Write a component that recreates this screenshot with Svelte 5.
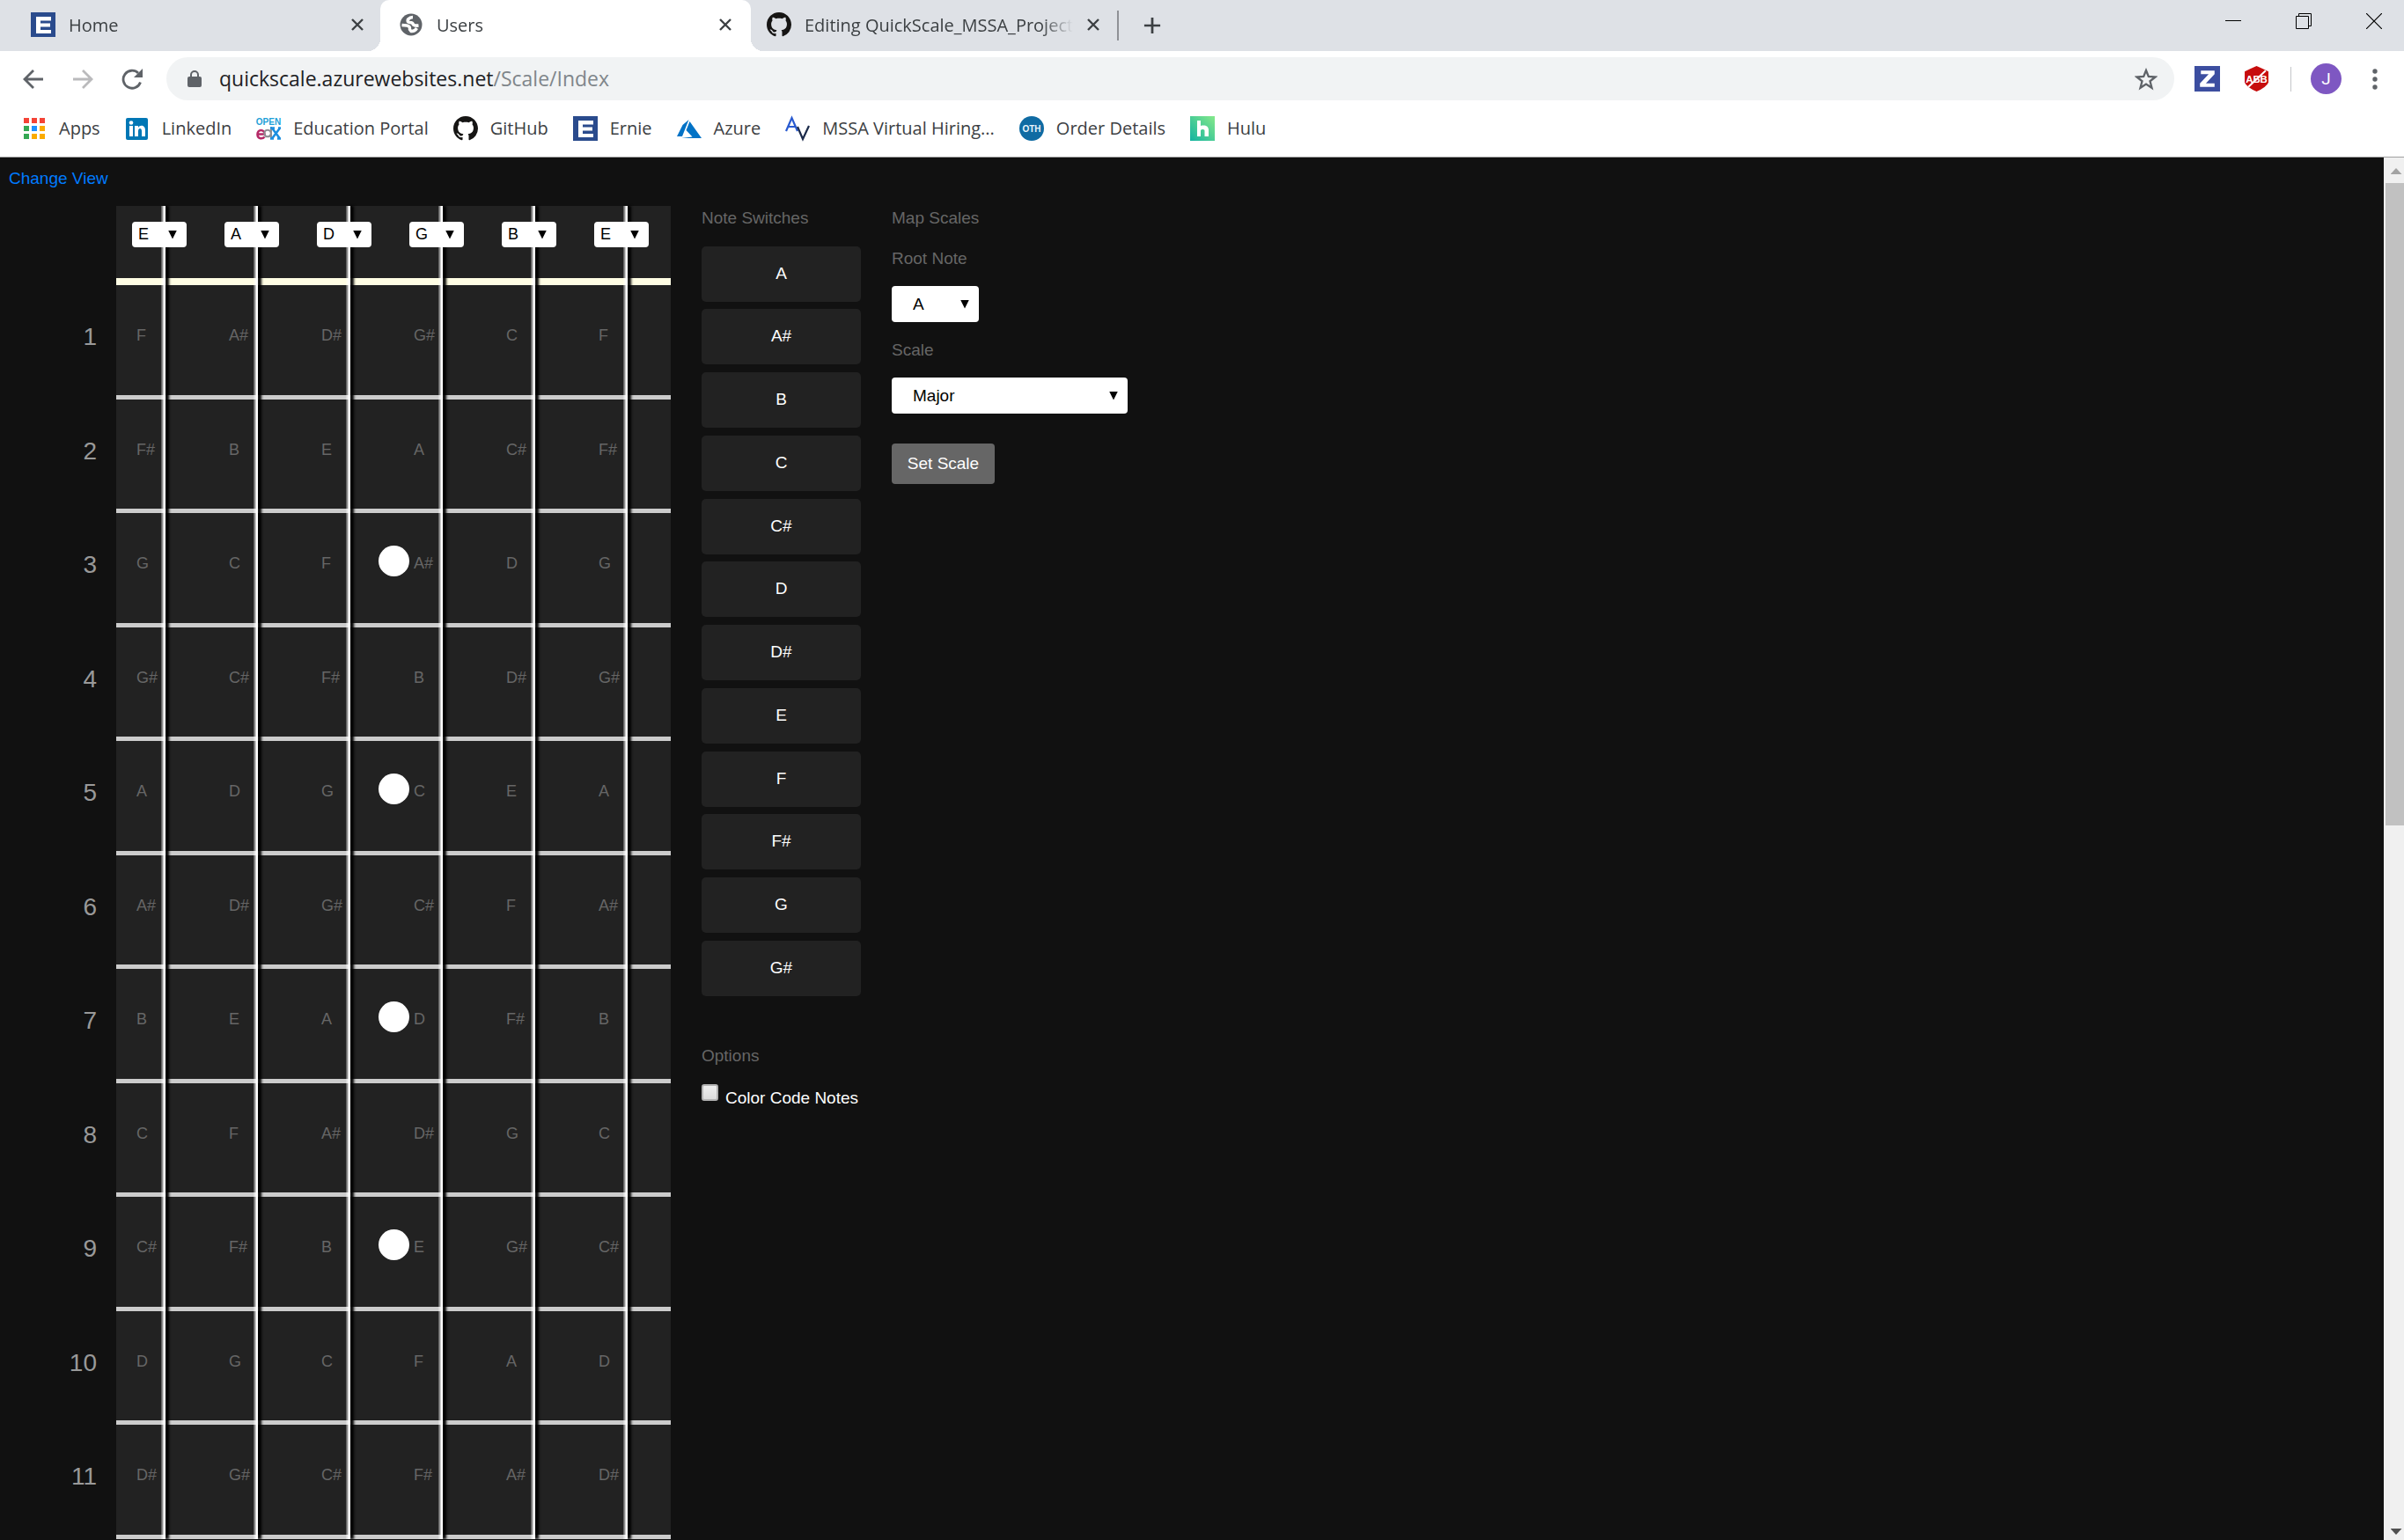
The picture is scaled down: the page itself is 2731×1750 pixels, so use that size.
<script lang="ts">
  const chromatic = ['A', 'A#', 'B', 'C', 'C#', 'D', 'D#', 'E', 'F', 'F#', 'G', 'G#'];
  const scales = ['Major', 'Minor', 'Pentatonic Major', 'Pentatonic Minor', 'Blues'];
  const frets = Array.from({ length: 11 }, (_, i) => i + 1);
  const markers = [3, 5, 7, 9];
  const tuning = $state(['E', 'A', 'D', 'G', 'B', 'E']);
  let root = $state('A');
  let scale = $state('Major');
  let colorCode = $state(false);

  const noteAt = (open: string, fret: number) =>
    chromatic[(chromatic.indexOf(open) + fret) % 12];

  const bookmarks = [
    { icon: 'apps', label: 'Apps' },
    { icon: 'linkedin', label: 'LinkedIn' },
    { icon: 'edx', label: 'Education Portal' },
    { icon: 'github', label: 'GitHub' },
    { icon: 'e', label: 'Ernie' },
    { icon: 'azure', label: 'Azure' },
    { icon: 'av', label: 'MSSA Virtual Hiring...' },
    { icon: 'oth', label: 'Order Details' },
    { icon: 'hulu', label: 'Hulu' }
  ];
  const tabs = [
    { icon: 'e', title: 'Home', active: false },
    { icon: 'globe', title: 'Users', active: true },
    { icon: 'github', title: 'Editing QuickScale_MSSA_Project', active: false }
  ];
  const appColors = ['#f44336', '#f44336', '#f44336', '#34a853', '#1e90ff', '#fbab00', '#34a853', '#fbab00', '#fbab00'];
</script>

{#snippet icon(name: string)}
  <svg class="icon" viewBox="0 0 28 28" aria-hidden="true">
    {#if name === 'e'}
      <rect width="28" height="28" fill="#2a4b8d" />
      <path d="M6 5h17v4.500H11v3h11v4H11v3.500h12V24H6z" fill="#fff" />
    {:else if name === 'globe'}
      <circle cx="14" cy="14" r="12.500" fill="#5f6368" />
      <path d="M16 5.500Q13 5.500 10.500 8Q9 11 12.500 11.500Q16 11.500 16.500 14Q18 15.500 22.500 15" fill="none" stroke="#fff" stroke-width="3.600" />
      <path d="M3.500 14.500L9 15Q13 15.500 12.500 19.500L14 21.500Q18 22 20.500 18" fill="none" stroke="#fff" stroke-width="3.400" />
    {:else if name === 'github'}
      <g transform="scale(1.75)">
        <path d="M8 0C3.580 0 0 3.580 0 8c0 3.540 2.290 6.530 5.470 7.590.4.070.55-.17.55-.38 0-.19-.01-.82-.01-1.490-2.010.37-2.530-.49-2.690-.94-.09-.23-.48-.94-.82-1.130-.28-.15-.68-.52-.01-.53.630-.01 1.080.58 1.230.82.720 1.210 1.870.87 2.330.66.070-.52.280-.87.510-1.070-1.780-.2-3.640-.89-3.640-3.950 0-.87.310-1.590.820-2.150-.08-.2-.36-1.020.080-2.120 0 0 .67-.21 2.200.82.640-.18 1.320-.27 2-.27s1.360.09 2 .27c1.530-1.040 2.200-.82 2.200-.82.440 1.100.160 1.920.080 2.120.510.560.820 1.270.820 2.150 0 3.070-1.870 3.750-3.650 3.950.290.25.540.73.540 1.480 0 1.070-.01 1.930-.01 2.200 0 .21.150.46.550.38A8.010 8.010 0 0 0 16 8c0-4.420-3.580-8-8-8z" fill="#161514" />
      </g>
    {:else if name === 'apps'}
      {#each appColors as c, i}
        <rect x={2 + (i % 3) * 9} y={2 + Math.floor(i / 3) * 9} width="6" height="6" fill={c} />
      {/each}
    {:else if name === 'linkedin'}
      <rect x="1" y="2" width="25" height="25" rx="2" fill="#0077b5" />
      <path d="M5 11h4v12H5zM11 11h4v2c2-3.500 8-3 8 3v7h-4v-6c0-4-4-4-4 0v6h-4z" fill="#fff" />
      <circle cx="7" cy="7.500" r="2.300" fill="#fff" />
    {:else if name === 'edx'}
      <text x="14" y="10" font-size="10" font-weight="700" text-anchor="middle" fill="#1e9fd8" class="mark">OPEN</text>
      <g fill="none" stroke-width="2.600">
        <path d="M1.500 20.500h8c0-6-8-6-8 0s6 5.500 8 3" stroke="#b52a67" />
        <path d="M17 12v14M16.500 21a3.800 3.800 0 1 0-7 0 3.800 3.800 0 0 0 7 0" stroke="#8e8e93" stroke-width="2" />
        <path d="M18 13.500l9 12M27 13.500l-9 12M16 13.500h5M25 13.500h3M16 25.500h4M24 25.500h4" stroke="#1b8ee0" />
      </g>
    {:else if name === 'azure'}
      <path d="M13.500 4L6.500 10 0 23h6zM14.500 6l-4 10 7 7.500L5 25h23z" fill="#0072c6" />
    {:else if name === 'av'}
      <g fill="none" stroke-width="2.200">
        <path d="M1 17L7.500 2 14 17M4 12h7" stroke="#2a5bd0" />
        <path d="M14 12l6 14 7-15" stroke="#1b2a4a" />
      </g>
    {:else if name === 'oth'}
      <circle cx="14" cy="14" r="14" fill="#0f6ba3" />
      <text x="14" y="18" font-size="10" font-weight="700" text-anchor="middle" fill="#e8f4fb" class="mark">OTH</text>
    {:else if name === 'hulu'}
      <defs>
        <linearGradient id="hulu-fill" x1="1" y1="0" x2="0" y2="1">
          <stop offset="0" stop-color="#86e98a" />
          <stop offset="1" stop-color="#12b3a0" />
        </linearGradient>
      </defs>
      <rect width="28" height="28" fill="url(#hulu-fill)" />
      <path d="M8 5h4v6c5-1.500 9 .5 9 4.500V23h-4.500v-6.500c0-2-4.500-2-4.500 0V23H8z" fill="#fff" />
    {/if}
  </svg>
{/snippet}

<div class="window">
  <header class="tabstrip">
    {#each tabs as tab}
      <div class="tab" class:active={tab.active}>
        {@render icon(tab.icon)}
        <span class="title">{tab.title}</span>
        <button class="close" aria-label="Close tab">
          <svg viewBox="0 0 16 16"><path d="M2 2l12 12M14 2L2 14" stroke="#3c4043" stroke-width="2.400" /></svg>
        </button>
      </div>
    {/each}
    <span class="split"></span>
    <button class="new" aria-label="New tab">
      <svg viewBox="0 0 22 22"><path d="M11 1v20M1 11h20" stroke="#3c4043" stroke-width="3" /></svg>
    </button>
    <div class="controls">
      <button aria-label="Minimize">
        <svg viewBox="0 0 18 18"><path d="M0 8.500h18" stroke="#000" /></svg>
      </button>
      <button aria-label="Restore">
        <svg viewBox="0 0 18 18"><path d="M.5 3.500h14v14H.5zM3.500 3.500v-3h14v14h-3" fill="none" stroke="#000" /></svg>
      </button>
      <button aria-label="Close">
        <svg viewBox="0 0 18 18"><path d="M0 0l18 18M18 0L0 18" stroke="#000" stroke-width="1.200" /></svg>
      </button>
    </div>
  </header>

  <nav class="toolbar">
    <button class="nav" aria-label="Back">
      <svg viewBox="0 0 24 24"><path d="M23 12H3M12 2L2 12l10 10" fill="none" stroke="#5f6368" stroke-width="2.800" /></svg>
    </button>
    <button class="nav" aria-label="Forward">
      <svg viewBox="0 0 24 24"><path d="M1 12h20M12 2l10 10-10 10" fill="none" stroke="#bababc" stroke-width="2.800" /></svg>
    </button>
    <button class="nav" aria-label="Reload">
      <svg viewBox="0 0 24 24">
        <path d="M21.500 15.500A10 10 0 1 1 19 5" fill="none" stroke="#5f6368" stroke-width="2.800" />
        <path d="M24 0v10H14z" fill="#5f6368" />
      </svg>
    </button>
    <div class="address">
      <svg class="lock" viewBox="0 0 16 20">
        <rect x="0" y="7" width="16" height="12" rx="2" fill="#5f6368" />
        <path d="M4 8V5a4 4 0 0 1 8 0v3" fill="none" stroke="#5f6368" stroke-width="2" />
      </svg>
      <span class="url">quickscale.azurewebsites.net<span class="path">/Scale/Index</span></span>
      <button class="star" aria-label="Bookmark this page">
        <svg viewBox="0 0 26 26"><path d="M13 3l2.800 7 7.700.5-6 4.800 2 7.500L13 18.600l-6.500 4.200 2-7.500-6-4.800 7.700-.5z" fill="none" stroke="#5f6368" stroke-width="2.300" /></svg>
      </button>
    </div>
    <button class="ext" aria-label="Z extension">
      <svg viewBox="0 0 28 28"><rect width="28" height="28" fill="#3c4ea0" /><path d="M7 5h15v4L12.500 19H22v4H6v-4L15.500 9H7z" fill="#fff" /></svg>
    </button>
    <button class="ext" aria-label="Ad blocker">
      <svg viewBox="0 0 28 28">
        <path d="M14 0l6.500 3L27 6v12q-2 5-13 10Q3 23 1 18V6l6.500-3z" fill="#c70d0d" />
        <text x="14" y="18" font-size="11" font-weight="700" text-anchor="middle" fill="#fff" class="mark">ABB</text>
        <path d="M5 23L24 5" stroke="#fff" stroke-width="2" />
      </svg>
    </button>
    <span class="rule"></span>
    <button class="avatar" aria-label="Profile">J</button>
    <button class="menu" aria-label="Menu">
      <svg viewBox="0 0 6 24"><g fill="#5f6368"><circle cx="3" cy="3" r="2.700" /><circle cx="3" cy="12" r="2.700" /><circle cx="3" cy="21" r="2.700" /></g></svg>
    </button>
  </nav>

  <nav class="bookmarks">
    {#each bookmarks as b}
      <a href="#{b.icon}">{@render icon(b.icon)}<span>{b.label}</span></a>
    {/each}
  </nav>

  <div class="viewport">
    <main>
      <a class="change" href="#view">Change View</a>
      <div class="columns">
        <ol class="numbers">
          {#each frets as f}<li>{f}</li>{/each}
        </ol>

        <section class="board" aria-label="Fretboard">
          <div class="strings">
            {#each tuning as _}<div class="lane"><i></i></div>{/each}
          </div>
          <div class="head">
            {#each tuning as _, s}
              <span class="drop small">
                <select aria-label="String {6 - s} tuning" bind:value={tuning[s]}>
                  {#each chromatic as n}<option>{n}</option>{/each}
                </select>
              </span>
            {/each}
          </div>
          {#each frets as f}
            <div class="fret">
              {#each tuning as open}<span>{noteAt(open, f)}</span>{/each}
              {#if markers.includes(f)}<b class="dot"></b>{/if}
            </div>
          {/each}
        </section>

        <section class="switches">
          <h2>Note Switches</h2>
          <div class="list">
            {#each chromatic as n}<button>{n}</button>{/each}
          </div>
          <h2>Options</h2>
          <label class="check">
            <input type="checkbox" bind:checked={colorCode} />
            <span>Color Code Notes</span>
          </label>
        </section>

        <section class="scales">
          <h2>Map Scales</h2>
          <label for="root">Root Note</label>
          <span class="drop root">
            <select id="root" bind:value={root}>
              {#each chromatic as n}<option>{n}</option>{/each}
            </select>
          </span>
          <label for="scale">Scale</label>
          <span class="drop wide">
            <select id="scale" bind:value={scale}>
              {#each scales as s}<option>{s}</option>{/each}
            </select>
          </span>
          <button class="set">Set Scale</button>
        </section>
      </div>
    </main>
    <div class="scrollbar" aria-hidden="true">
      <span class="up"></span>
      <span class="thumb"></span>
      <span class="down"></span>
    </div>
  </div>
</div>

<style>
  :global(body) {
    margin: 0;
    background: #111;
  }
  .window {
    display: flex;
    flex-direction: column;
    height: 100vh;
    overflow: hidden;
    font-family: 'Open Sans', 'Noto Sans', sans-serif;
    color: #3c4043;
  }
  .window :global(*) {
    box-sizing: border-box;
  }
  svg {
    display: block;
  }
  button {
    border: 0;
    padding: 0;
    background: none;
    font: inherit;
    color: inherit;
  }
  .icon {
    width: 28px;
    height: 28px;
    flex: none;
    overflow: visible;
  }
  .mark {
    font-family: 'Liberation Sans', sans-serif;
  }

  .tabstrip {
    display: flex;
    align-items: center;
    height: 58px;
    flex: none;
    padding-left: 14px;
    background: #dee1e6;
    font-size: 20px;
  }
  .tab {
    position: relative;
    display: flex;
    align-items: center;
    width: 418px;
    height: 58px;
    padding: 0 18px 2px 21px;
    gap: 15px;
  }
  .tab.active {
    width: 421px;
    margin-right: -3px;
    padding-right: 21px;
    background: #fff;
    border-radius: 10px 10px 0 0;
  }
  .tab.active::before,
  .tab.active::after {
    content: '';
    position: absolute;
    bottom: 0;
    width: 14px;
    height: 14px;
  }
  .tab.active::before {
    right: 100%;
    background: radial-gradient(circle at 0 0, transparent 14px, #fff 14px);
  }
  .tab.active::after {
    left: 100%;
    background: radial-gradient(circle at 100% 0, transparent 14px, #fff 14px);
  }
  .title {
    flex: 1;
    min-width: 0;
    overflow: hidden;
    white-space: nowrap;
    mask-image: linear-gradient(to left, transparent, #000 36px);
  }
  .close svg {
    width: 16px;
    height: 16px;
  }
  .split {
    width: 2px;
    height: 34px;
    margin: 0 28px 0 1px;
    background: #8f9196;
  }
  .new svg {
    width: 20px;
    height: 20px;
  }
  .controls {
    display: flex;
    gap: 62px;
    margin-left: auto;
    padding: 0 25px 10px 0;
  }
  .controls svg {
    width: 18px;
    height: 18px;
  }

  .toolbar {
    display: flex;
    align-items: center;
    height: 63px;
    flex: none;
    padding-left: 26px;
    background: #fff;
  }
  .nav {
    margin-right: 32px;
  }
  .nav svg {
    width: 24px;
    height: 24px;
  }
  .address {
    display: flex;
    align-items: center;
    flex: 1;
    height: 49px;
    margin-left: -5px;
    padding: 0 19px 0 24px;
    border-radius: 25px;
    background: #f1f3f4;
    font-size: 23px;
    color: #202124;
  }
  .url {
    padding-bottom: 2px;
  }
  .lock {
    width: 16px;
    height: 20px;
    margin-right: 20px;
  }
  .path {
    color: #80868b;
  }
  .star {
    margin-left: auto;
  }
  .star svg {
    width: 26px;
    height: 26px;
  }
  .ext {
    margin-left: 23px;
  }
  .ext + .ext {
    margin-left: 27px;
  }
  .ext svg {
    width: 29px;
    height: 29px;
  }
  .rule {
    width: 1px;
    height: 28px;
    margin: 0 22px 0 24px;
    background: #c4c6c9;
  }
  .avatar {
    width: 35px;
    height: 35px;
    border-radius: 50%;
    background: #7e57c2;
    color: #fff;
    font-family: Roboto, sans-serif;
    font-size: 19px;
  }
  .menu {
    margin: 0 30px 0 35px;
  }
  .menu svg {
    width: 6px;
    height: 24px;
  }

  .bookmarks {
    display: flex;
    align-items: center;
    gap: 28px;
    height: 58px;
    flex: none;
    padding: 0 0 8px 25px;
    border-bottom: 1px solid #a0a0a0;
    background: #fff;
    font-size: 20px;
  }
  .bookmarks a {
    display: flex;
    align-items: center;
    gap: 14px;
    color: inherit;
    text-decoration: none;
    white-space: nowrap;
  }

  .viewport {
    display: flex;
    flex: 1;
    min-height: 0;
    background: #111;
    font-family: 'Liberation Sans', Arial, sans-serif;
    font-size: 19px;
    line-height: 28px;
    color: #666;
  }
  main {
    flex: 1;
    overflow: hidden;
  }
  .change {
    display: block;
    width: max-content;
    padding: 10px 10px 17px;
    color: #007bff;
    text-decoration: none;
  }
  .columns {
    display: flex;
    align-items: flex-start;
  }
  .numbers {
    width: 132px;
    margin: 0;
    padding: 90px 22px 0 0;
    list-style: none;
    text-align: right;
    font-size: 28px;
    line-height: 32px;
    color: #999;
  }
  .numbers li {
    height: 130px;
    padding-top: 43px;
  }
  .numbers li:nth-child(even) {
    height: 129px;
  }

  .board {
    position: relative;
    width: 630px;
    background: #222;
  }
  .strings {
    position: absolute;
    inset: 0;
    z-index: 1;
    display: grid;
    grid-template-columns: repeat(6, 1fr);
    pointer-events: none;
  }
  .lane {
    display: flex;
    padding-left: 51px;
  }
  .lane i {
    width: 5px;
    background: linear-gradient(to right, #fff3, #fff8 35%, #fff 65%, #fff);
    box-shadow: 4px 0 3px #000;
  }
  .head,
  .fret {
    display: grid;
    grid-template-columns: repeat(6, 1fr);
  }
  .head {
    height: 90px;
    padding-top: 18px;
    border-bottom: 8px solid #fffde4;
  }
  .fret {
    position: relative;
    height: 130px;
    border-bottom: 5px solid #ccc;
    font-size: 18px;
  }
  .fret:nth-child(even) {
    height: 129px;
  }
  .fret span {
    padding: 43px 0 0 23px;
  }
  .dot {
    position: absolute;
    top: 37px;
    left: calc(50% - 17px);
    width: 35px;
    height: 35px;
    border-radius: 50%;
    background: #fff;
  }

  .drop {
    position: relative;
    z-index: 2;
    display: block;
  }
  .drop::after {
    content: '';
    position: absolute;
    top: calc(50% - 5px);
    right: 11px;
    width: 10px;
    height: 10px;
    background: #000;
    clip-path: polygon(0 0, 100% 0, 50% 100%);
    pointer-events: none;
  }
  select {
    display: block;
    width: 100%;
    height: 41px;
    padding: 0 24px;
    border: 0;
    border-radius: 4px;
    appearance: none;
    background: #fff;
    color: #000;
    font: inherit;
  }
  .small {
    width: 62px;
    height: 29px;
    margin-left: 18px;
  }
  .small select {
    height: 29px;
    padding: 0 7px 1px;
    font-size: 18px;
    line-height: 28px;
  }
  .root {
    width: 99px;
  }
  .wide {
    width: 268px;
  }

  h2 {
    margin: 0;
    font: inherit;
  }
  .switches {
    margin-left: 35px;
  }
  .list {
    display: flex;
    flex-direction: column;
    padding: 18px 0 54px;
  }
  .list button {
    width: 181px;
    height: 63px;
    margin-bottom: 9px;
    padding-bottom: 1px;
    border-radius: 5px;
    background: #222;
    color: #fff;
  }
  .list button:nth-child(4n + 1) {
    margin-bottom: 8px;
  }
  .list button:last-child {
    margin-bottom: 0;
  }
  .check {
    display: flex;
    align-items: flex-start;
    gap: 8px;
    padding-top: 18px;
    color: #fff;
  }
  .check span {
    padding-top: 2px;
  }
  .check input {
    width: 19px;
    height: 19px;
    margin: 0;
    border: 2px solid #b2b2b2;
    border-radius: 3px;
    appearance: none;
    background: linear-gradient(#eee, #dcdcdc);
  }
  .check input:checked {
    background: #0075ff;
  }
  .scales {
    display: flex;
    flex-direction: column;
    align-items: flex-start;
    gap: 18px;
    margin-left: 35px;
  }
  .scales label {
    line-height: 27px;
  }
  .set {
    width: 117px;
    height: 46px;
    margin-top: 16px;
    border-radius: 4px;
    background: #666;
    color: #fff;
  }

  .scrollbar {
    display: flex;
    flex-direction: column;
    align-items: center;
    width: 23px;
    padding: 12px 0 6px 2px;
    background: #f0f0f0;
  }
  .up,
  .down {
    width: 13px;
    height: 7px;
    margin-left: 3px;
    background: #505050;
    clip-path: polygon(0 0, 100% 0, 50% 100%);
  }
  .up {
    background: #a3a3a3;
    clip-path: polygon(50% 0, 100% 100%, 0 100%);
  }
  .thumb {
    width: 100%;
    height: 47%;
    margin-top: 10px;
    background: #c1c1c1;
  }
  .down {
    margin-top: auto;
  }
</style>
